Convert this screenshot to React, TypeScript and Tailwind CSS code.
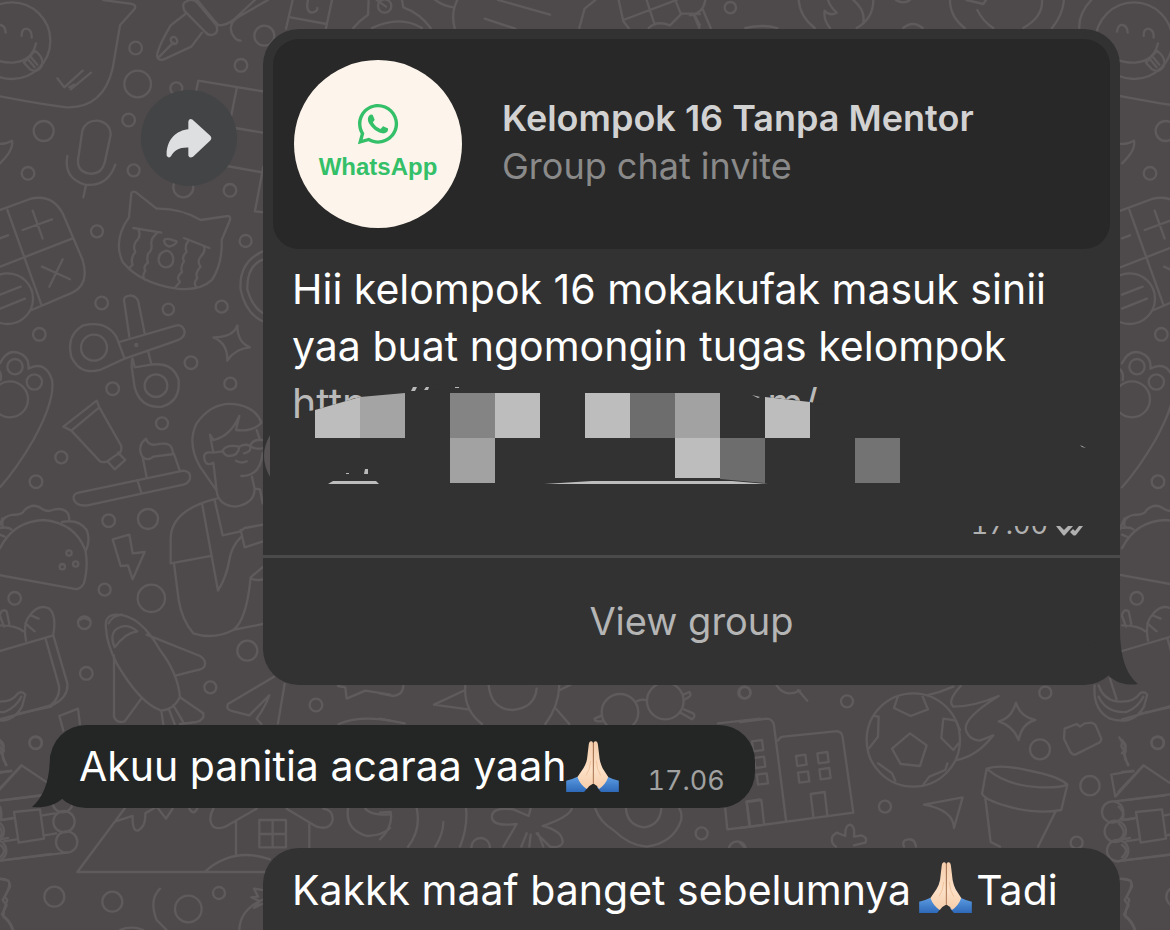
import type { ReactNode } from 'react'
import { FaWhatsapp } from 'react-icons/fa'

type Dot = [number, number, number]

interface DoodleSheet {
  x: number
  y: number
  dots: Dot[]
  lines: string[]
}

// wallpaper drawings, each sheet is drawn at 3x and placed at x/y
const sheets: DoodleSheet[] = [
  {
    x: 0,
    y: 0,
    dots: [
      [407, 144, 19], [413, 252, 40], [529, 265, 18], [723, 196, 19], [793, 107, 30], [386, 360, 19],
      [131, 393, 30], [401, 511, 18], [84, 520, 19], [690, 571, 19], [550, 562, 30], [291, 694, 18],
      [737, 723, 18], [305, 909, 19], [505, 928, 17], [665, 920, 18], [36, 122, 115], [23, 896, 76],
    ],
    lines: [
      // smiley
      'M-15 95Q-12 72 2 75Q16 78 17 98M65 108Q64 86 80 86Q96 90 95 113M-50 150Q-20 190 40 188Q96 184 108 130M72 188L105 152M105 152Q133 174 126 196Q112 222 90 208L72 188M92 170L112 194M84 178L104 202',
      // speech bubble
      'M310 0L390 11Q412 14 403 28L360 76L338 205Q310 325 200 322Q120 312 0 289L-60 277M172 235L193 262L248 212M212 268L273 218M208 262L222 254',
      // pen
      'M556 42L512 76Q480 130 472 160Q468 182 490 179L574 140L606 98M478 170L520 128M514 125A9 9 0 1 0 530 118A9 9 0 1 0 514 125M553 32Q544 8 560 4Q574 -6 590 6L648 74Q658 98 640 104Q624 108 616 96ZM592 0Q640 60 656 76Q680 76 700 60L765 0M804 0L716 50Q685 70 695 98Q706 122 722 122',
      // brick wall
      'M588 275L595 242L800 276M710 266L694 346M706 384L800 400M680 498L780 516M790 500L765 634L800 638',
      // mic
      'M247 392Q258 360 294 362Q332 370 332 405L314 488Q304 524 270 521Q232 516 234 480ZM202 468Q190 534 255 554Q322 562 346 494M258 556L250 592',
      'M-10 430Q10 436 36 422Q42 450 0 490',
      // calculator
      'M-10 634L90 597Q155 580 188 640L248 780Q270 856 212 880L95 930M22 630L124 914M-10 804L216 716M98 632L128 716M68 690L156 658M126 800L210 838M188 778L148 860M0 715L24 706M0 884L62 860M0 926L75 896',
      // crying cat
      'M387 652L394 580Q400 570 412 580L470 626Q540 624 602 660L684 648Q692 650 690 660L665 720Q668 790 636 840Q600 874 530 866Q420 850 368 786Q338 720 387 652M400 684L484 698M552 714L628 744M416 690Q424 710 408 724Q398 740 406 756Q390 776 398 794L386 806M470 700Q452 716 454 732Q458 750 444 762Q440 776 444 788Q428 800 436 812Q424 830 436 840M566 720Q552 740 560 756Q544 770 552 784Q540 800 546 816Q526 832 540 846L526 862M612 740Q618 754 602 770Q590 786 602 800Q584 820 592 834Q578 850 590 862M492 722Q496 714 512 718L530 724Q530 734 508 740Q494 736 492 722M500 752Q474 758 476 782Q480 802 498 802Q520 800 520 776Q516 754 500 752Z',
      'M800 750Q715 780 722 870Q740 950 800 968M800 775Q740 790 742 868Q760 930 800 945',
    ],
  },
  {
    x: 0,
    y: 300,
    dots: [
      [118, 103, 19], [282, 143, 39], [573, 188, 19], [338, 266, 19], [468, 257, 34], [691, 251, 18],
      [486, 370, 18], [184, 472, 18], [108, 545, 19], [326, 662, 19], [444, 657, 30], [314, 869, 18],
      [454, 895, 41], [44, 895, 19], [45, 200, 23], [103, 246, 23], [30, 298, 54], [207, 759, 8],
      [227, 792, 8], [187, 800, 8], [409, 135, 3],
    ],
    lines: [
      // scissors
      'M388 110L372 0Q372 -12 392 -14Q414 -10 416 10L434 100M358 126L530 76Q552 74 554 98Q552 114 530 122L374 176L300 210Q240 226 214 170Q198 106 250 76Q320 60 350 112L374 176M398 176L404 202L440 196Q518 180 536 240Q542 304 486 320Q422 326 404 262L395 200L396 178M444 152L454 192',
      'M640 112Q700 112 712 76Q712 128 750 142Q704 146 682 182Q684 130 640 112Z',
      // paw
      'M0 190Q20 148 54 158Q90 170 85 206Q136 180 156 240Q166 300 100 420Q50 506 0 562M-20 200Q8 210 2 240',
      // tube
      'M190 380L290 302L298 322L214 392ZM298 322L364 438Q366 460 350 464L322 484Q306 490 298 482L214 392M322 484L344 508L376 480L354 458',
      // brush
      'M222 600Q216 582 236 578L550 512Q574 514 570 536Q566 550 550 554L262 616Q232 620 222 600M412 540L424 578M440 532L428 472Q414 450 426 428L438 416Q444 436 466 434Q510 424 516 446Q520 462 522 462L540 514M430 472Q444 484 460 470L522 462',
      // person
      'M650 572L600 500Q560 430 590 370Q640 300 714 314Q770 326 784 368Q760 396 708 390L718 348Q690 410 640 420L630 404L640 458Q606 452 614 480Q620 500 640 488L650 572M640 458L668 454M668 452Q680 432 718 440Q716 468 686 468Q672 466 668 452M718 440Q736 430 750 438Q756 456 732 460M752 434Q762 416 790 420M754 440Q772 450 790 444M708 482Q726 492 740 484M724 528Q780 530 788 460M650 572Q654 616 706 620Q764 610 764 566L756 530M764 566L780 568L788 610M770 390L780 420M650 596Q510 630 512 720L512 790L634 768M606 610L654 872Q680 830 688 780Q694 740 722 712M644 600L668 706L722 694L734 684L790 674M722 690L734 742L790 724M522 790L536 900Q546 960 580 1000Q640 1020 700 990Q740 960 752 832L790 800M752 832Q760 844 790 838M700 990L790 972',
      // taco
      'M8 680Q0 650 40 644Q66 646 74 630Q100 606 128 628Q144 638 164 628Q208 622 208 660M186 666Q236 656 260 690Q272 720 258 752M0 745Q40 664 130 660Q224 668 256 750Q266 800 252 850Q240 872 220 866L-10 824M0 684Q24 680 34 688M0 704L14 710M-8 690L8 655',
      'M338 718L388 704L398 760L434 756L398 838L384 796L362 798Z',
      'M240 960Q252 948 266 960',
    ],
  },
  {
    x: 0,
    y: 600,
    dots: [
      [253, 68, 19], [259, 220, 19], [742, 152, 30], [631, 262, 18], [948, 315, 19], [107, 428, 19],
      [163, 890, 30], [337, 905, 30], [565, 927, 40], [657, 879, 18], [192, 665, 32], [200, 726, 32],
      [188, 607, 30],
    ],
    lines: [
      // grocery bag
      'M-10 156L160 106L202 250Q206 290 160 314L0 358M136 114L176 254Q184 290 150 318M78 122Q68 70 90 46Q116 10 148 26Q170 46 160 104M92 46L116 56M76 70L104 94M70 94Q50 76 0 76M0 44Q6 24 20 34L28 72M0 48L12 80',
      // rocket
      'M318 86Q312 44 350 44Q420 44 480 150Q534 220 540 292Q520 330 484 332Q420 310 350 190Q320 130 318 86M344 142Q376 98 412 94Q376 64 344 92Q330 112 344 142M326 70Q336 48 366 44M440 104L600 168Q620 180 614 198Q608 208 594 210L524 228M342 166L342 350Q350 372 374 364L424 296M484 332L490 374M506 326L524 372M520 316L552 370M540 292L610 340Q614 360 590 366L540 372',
      'M178 348L234 326L240 374M178 348L190 392M-4 420Q20 430 6 460L18 496',
      // cabin
      'M0 516L34 514M-10 575L64 496L142 548M0 602L130 586M0 660L36 656M42 636L120 628L132 716L56 728ZM128 646L164 640M0 718L24 714M134 706L168 700M0 782L200 758M-10 620Q12 640 0 660M-10 670Q20 700 -10 720M0 735Q24 750 0 772',
      // mountain house
      'M375 624L232 816L800 816M346 664L398 648Q396 694 414 692Q438 680 436 640L470 620L498 656L518 626M568 626Q580 648 592 626M640 626Q622 660 640 680Q660 692 690 672L770 626M860 626L950 680Q990 692 998 660Q1000 630 970 626M708 664L708 768M928 672L928 742M778 660L858 660L858 742L778 742ZM818 660L818 742M778 702L858 702M616 814Q700 740 810 778',
      'M822 230L684 312Q676 330 700 334L748 346L808 286Q796 320 770 356L784 372M854 252L834 370M1014 258L1036 262L1040 296L1096 272L1170 284M1016 372Q1080 346 1170 362M1044 626Q1036 690 1100 708Q1150 706 1170 684M1096 626Q1110 646 1170 644',
      'M480 866Q446 900 470 960L500 990M0 836Q32 836 30 860L14 890L22 900L12 930L10 950Q30 966 38 990M786 900Q720 930 718 990M786 870L762 866L774 890L754 892L780 904L762 924L786 912M360 990Q394 976 430 990M0 420Q16 440 0 460',
    ],
  },
  {
    x: 380,
    y: 660,
    dots: [
      [1093, 98, 18], [965, 520, 18], [302, 562, 28], [720, 157, 55], [856, 123, 55], [1072, 570, 26],
    ],
    lines: [
      'M0 100L40 108Q72 104 70 74M256 90L162 134L264 148M0 176L74 190M256 76Q250 150 306 192M538 76Q536 140 496 192M326 76Q334 148 398 150Q464 144 470 86M540 90L572 74M528 146L568 192M770 124Q782 116 800 120M910 104L928 96Q936 104 926 112L912 120M902 158L936 178Q948 170 940 160L912 148M666 166L644 176Q642 186 666 184',
      'M0 458L32 456Q40 500 0 538M110 444Q124 510 84 560M258 444Q264 500 240 560M190 486Q190 520 166 560M400 448L446 468L452 446M400 448Q332 440 336 474Q340 500 410 492L370 560M576 444Q570 470 488 498Q550 514 548 548Q540 566 510 560L470 520M440 520L424 560M452 524L448 560M474 520L490 560M646 446Q660 486 700 510Q750 558 800 560Q880 550 904 480Q906 456 898 446M738 446Q742 496 792 502Q840 496 844 446',
      // flats
      'M1014 190L1140 176M1036 446L1042 508L1140 496M1100 424L1140 418M1100 424L1110 496',
    ],
  },
  {
    x: 740,
    y: 660,
    dots: [
      [15, 98, 17], [321, 124, 18], [916, 98, 18], [900, 268, 30], [1050, 377, 29], [1253, 249, 18],
      [435, 440, 18], [1010, 548, 18], [1118, 456, 32], [1126, 514, 32], [1133, 572, 32], [520, 240, 140],
    ],
    lines: [
      'M110 76Q134 114 180 92M174 90L202 122',
      // flats
      'M0 186L80 176Q98 176 102 196L138 480M114 242Q118 232 130 230L284 214Q306 212 308 232L340 458L0 504M20 426L64 420L72 490M20 426L28 496M212 402L254 396L262 466M212 402L220 470M36 244L66 240L70 270L40 274ZM42 294L72 290L76 320L46 324ZM50 344L80 340L84 370L54 374ZM168 288L196 284L200 314L172 318ZM174 338L204 334L208 364L178 368ZM232 280L262 276L266 306L236 310ZM238 328L268 324L272 354L242 358Z',
      // football
      'M510 220L560 256L540 318L482 312L456 266ZM474 108L462 144L512 168L564 148L548 110M610 176L648 182L660 210M610 176L604 234L640 270L656 250M386 266L414 230L416 170L404 168M414 310L456 340L466 362M550 374L568 350L616 330L622 310M560 106Q600 98 640 80M662 78Q620 124 640 140Q700 140 776 108Q660 180 680 216Q690 240 720 242L760 226Q710 290 650 300',
      'M828 128Q840 170 886 180Q846 190 836 240Q820 198 776 184Q814 176 828 128Z',
      'M552 434L668 412L642 504Q640 450 552 434Z',
      'M974 206L1010 192L1020 200L1034 190L1056 188L1066 194L1084 236Q1084 246 1074 250L1006 284Q996 284 990 274L972 236Z',
      // flower pot
      'M740 326Q780 312 860 330Q960 350 982 374L964 450Q900 462 820 444Q740 424 726 402ZM740 326Q800 378 900 382Q960 384 982 374M736 414L752 546L780 560M946 456L894 560',
      // banana
      'M1064 76Q1058 150 1110 176Q1180 198 1212 140L1222 104Q1214 92 1200 100Q1180 130 1130 124Q1090 118 1076 76M1110 56L1130 118M1076 110Q1100 160 1160 156Q1196 140 1210 110M1196 162L1300 140',
      'M1138 232Q1148 246 1146 250Q1140 264 1158 272Q1146 290 1166 314M1114 344L1180 332M1114 344L1126 410L1210 318M1124 424L1300 402M1150 480L1186 474M1158 544L1196 538M1130 604L1300 582',
      // flowers
      'M288 560Q270 548 278 528L290 518L316 528Q314 496 330 494Q346 498 342 530L364 526Q384 532 376 548L342 556M492 560Q484 540 506 538Q524 536 528 560M0 548L14 562M1140 656L1172 662Q1180 680 1154 720L1166 736L1152 764Q1176 780 1186 810',
    ],
  },
  {
    x: 230,
    y: 0,
    dots: [[464, 18, 20]],
    lines: [
      'M188 0L168 86M182 52L290 72M306 0L288 84M234 0Q226 36 246 38Q264 34 262 24M416 0L414 44Q390 60 370 84M516 0L520 22Q570 40 602 84M426 84Q510 44 576 84M440 0L468 20M616 0Q640 18 670 22M682 0Q662 40 674 84M804 0L960 44M764 56L856 86M1096 0L1064 26L1048 84M1166 0L1180 64L1196 84M1180 60L1340 0M1250 0L1274 74M1336 0L1352 40L1410 42M1256 84Q1280 60 1320 76L1352 44M1392 42L1410 76',
    ],
  },
  {
    x: 690,
    y: 0,
    dots: [[121, 23, 17]],
    lines: [
      'M0 46Q40 40 46 0M12 46L28 84M38 28L62 84M166 84Q220 72 262 84M326 0Q330 50 374 84M414 0Q420 20 440 38Q420 50 404 32Q400 60 420 84M490 0Q526 30 520 66M550 0Q550 56 500 84M618 0Q640 14 660 0M640 84Q668 60 698 84M780 0Q780 50 824 84M830 0L880 12L888 0M862 30Q880 66 910 84M1056 0Q1060 50 1000 84M1122 0Q1118 46 1086 84M1204 0Q1166 40 1168 84',
    ],
  },
]

function Wallpaper() {
  return (
    <svg className="absolute inset-0 h-full w-full" aria-hidden="true">
      <defs>
        <g id="doodles" fill="none" stroke="#5f5b5c" strokeWidth="7" strokeLinecap="round" strokeLinejoin="round">
          {sheets.map((sheet, i) => (
            <g key={i} transform={`translate(${sheet.x} ${sheet.y}) scale(0.3333)`}>
              {sheet.dots.map(([cx, cy, r], j) => (
                <circle key={j} cx={cx} cy={cy} r={r} />
              ))}
              {sheet.lines.map((d, j) => (
                <path key={j} d={d} />
              ))}
            </g>
          ))}
        </g>
      </defs>
      <use href="#doodles" x="-1122" />
      <use href="#doodles" />
      <use href="#doodles" x="1122" />
    </svg>
  )
}

function PrayEmoji() {
  return (
    <svg viewBox="0 0 159 154" className="h-[51px] w-[53px] shrink-0" aria-hidden="true">
      <defs>
        <linearGradient id="skin" x1="0" y1="0" x2="0" y2="1">
          <stop offset="0" stopColor="#f5cfae" />
          <stop offset="0.6" stopColor="#fce0c6" />
          <stop offset="1" stopColor="#f6cdaa" />
        </linearGradient>
        <linearGradient id="sleeve" x1="0" y1="0" x2="0" y2="1">
          <stop offset="0" stopColor="#5b9be2" />
          <stop offset="1" stopColor="#2e69b8" />
        </linearGradient>
      </defs>
      <path d="M0 120Q18 116 34 108L66 140L54 154H0Z" fill="url(#sleeve)" />
      <path d="M159 120Q141 116 125 108L93 140L105 154H159Z" fill="url(#sleeve)" />
      <path d="M81 6Q80 0 75 1Q69 2 68 12L63 54Q60 70 52 82L34 109Q42 132 62 145Q72 132 82 128Z" fill="url(#skin)" />
      <path d="M83 6Q84 0 89 1Q95 2 96 12L101 54Q104 70 110 82L127 109Q119 132 99 145Q92 132 82 128Z" fill="url(#skin)" />
      <path d="M82 5V128" stroke="#b27c58" strokeWidth="3" fill="none" />
      <path d="M74 60Q72 88 60 104M91 60Q93 88 104 104" stroke="#f1c49d" strokeWidth="3" fill="none" />
    </svg>
  )
}

// pixelated tiles that hide the invite link
const tiles = [
  { points: '23,35 68,22 68,63 23,63', fill: '#bdbdbd' },
  { points: '68,22 113,18 113,63 68,63', fill: '#a4a4a4' },
  { points: '158,18 203,18 203,63 158,63', fill: '#848484' },
  { points: '203,18 248,18 248,63 203,63', fill: '#bdbdbd' },
  { points: '293,18 338,18 338,63 293,63', fill: '#bdbdbd' },
  { points: '338,18 383,18 383,63 338,63', fill: '#6d6d6d' },
  { points: '383,18 428,18 428,63 383,63', fill: '#a2a2a2' },
  { points: '473,22 518,27 518,63 473,63', fill: '#bdbdbd' },
  { points: '158,63 203,63 203,108 158,108', fill: '#a2a2a2' },
  { points: '383,63 428,63 428,103 383,103', fill: '#bdbdbd' },
  { points: '428,63 473,63 473,108 428,104', fill: '#6d6d6d' },
  { points: '563,63 608,63 608,108 563,108', fill: '#737373' },
  { points: '41,106 84,106 87,109 36,109', fill: '#bdbdbd' },
  { points: '252,109 300,106 440,106 476,109', fill: '#bdbdbd' },
]

function CensoredLink() {
  return (
    <div className="relative h-[139px]">
      <a href="#invite" className="flex gap-[400px] text-[#b9b9b9]">
        <span>http</span>
        <span>m/</span>
      </a>
      <svg className="absolute left-0 top-0 h-full w-full overflow-visible" aria-hidden="true">
        <rect x="-10" y="0" width="820" height="12" fill="#323232" />
        <path d="M10 37L23 35L68 22L113 18L160 12H458L473 22L518 27L532 30V63H10Z" fill="#323232" />
        {tiles.map((tile) => (
          <polygon key={tile.points} points={tile.points} fill={tile.fill} />
        ))}
        <path d="M121 12H125L123 16H119ZM134 12H137L136 15H132ZM163 12H167V13H163ZM54 98H57V99H54ZM73 94H76V99H72ZM460 20L468 22L466 23ZM788 70L794 73L790 72Z" fill="#b9b9b9" />
        <path d="M-22 60Q-34 81 -22 102Z" fill="#565253" />
        {/* strip over the upper half of the time */}
        <rect x="600" y="130" width="210" height="21" fill="#323232" />
      </svg>
    </div>
  )
}

function ForwardButton() {
  return (
    <button
      type="button"
      aria-label="Forward"
      className="mt-[61px] flex size-24 shrink-0 items-center justify-center rounded-full bg-[#424445]"
    >
      <svg viewBox="497 349 138 122" className="h-[41px] w-[46px]" fill="#dedfe0">
        <path d="M499 462C497 412 530 385 564 382V360Q565 348 576 353L629 401Q637 409 629 417L578 465Q567 471 564 461V437C537 436 521 446 513 462Q506 472 499 462Z" />
      </svg>
    </button>
  )
}

function SentBubble({ children, className }: { children: ReactNode; className: string }) {
  return <div className={`relative min-w-0 flex-1 bg-[#323232] ${className}`}>{children}</div>
}

export default function App() {
  return (
    <main className="relative h-screen overflow-hidden bg-[#4e4a4b] font-['Inter','Liberation_Sans',sans-serif] text-[41px] leading-[57px] text-white">
      <Wallpaper />

      <div className="relative flex h-full flex-col gap-10 pt-[29px]">
        {/* group invite */}
        <div className="flex shrink-0 items-start gap-[26px] pl-[141px] pr-[50px]">
          <ForwardButton />
          <SentBubble className="rounded-[36px] pt-[10px]">
            <div className="mx-[10px] flex items-center gap-10 rounded-[26px] bg-[#282828] p-[21px]">
              <div className="flex size-[168px] shrink-0 flex-col items-center justify-center rounded-full bg-[#fdf5ec] text-[#34bf69]">
                <FaWhatsapp className="size-[46px]" />
                <span className="font-['Liberation_Sans',sans-serif] text-[24px] font-bold leading-10">WhatsApp</span>
              </div>
              <div className="min-w-0 pb-1 leading-[48px]">
                <h2 className="text-[36px] font-semibold text-[#d2d2d2]">Kelompok 16 Tanpa Mentor</h2>
                <p className="text-[36px] text-[#8a8a8a]">Group chat invite</p>
              </div>
            </div>
            <div className="px-[29px] pt-3">
              <p>
                Hii kelompok 16 mokakufak masuk sinii
                <br />
                yaa buat ngomongin tugas kelompok
              </p>
              <CensoredLink />
              <div className="flex h-[41px] items-start justify-end gap-2 pr-2 text-[27px] leading-[22px] text-[#b0b0b0]">
                <time className="tabular-nums">17.00</time>
                <svg viewBox="0 0 27 10" className="mt-3 h-[10px] w-[27px]" fill="currentColor" aria-hidden="true">
                  <path d="M0 0H4L8 4L12 0H17L9 9Q8 10 7 9ZM17 3L19 5L23 0H27L20 9Q18 10 17 9L14 6Z" />
                </svg>
              </div>
            </div>
            <button type="button" className="block h-[130px] w-full border-t-[3px] border-[#4a4a4a] text-[38px] text-[#b5b5b5]">
              View group
            </button>
            <svg viewBox="0 0 54 56" className="absolute -right-[18px] bottom-0 h-[56px] w-[54px]" fill="#323232" aria-hidden="true">
              <path d="M36 0C36 28 42 45 54 55C43 57 33 54 25 47L0 20Z" />
            </svg>
          </SentBubble>
        </div>

        {/* reply */}
        <div className="flex shrink-0 pl-[50px]">
          <div className="relative flex h-[83px] items-center rounded-[36px] bg-[#242625] pl-[29px] pr-[30px]">
            <span>Akuu panitia acaraa yaah</span>
            <PrayEmoji />
            <time className="ml-7 mt-7 text-[27px] leading-8 tabular-nums text-[#a0a1a0]">17.06</time>
            <svg viewBox="0 0 58 54" className="absolute -left-[18px] bottom-0 h-[54px] w-[58px]" fill="#242625" aria-hidden="true">
              <path d="M18 0C18 27 12 42 0 53C11 54 22 52 30 45L34 42Z" />
            </svg>
          </div>
        </div>

        <div className="flex flex-1 pl-[263px] pr-[50px]">
          <SentBubble className="flex items-start rounded-t-[36px] px-[29px] pt-[14px]">
            <span className="mr-2">Kakkk maaf banget sebelumnya</span>
            <PrayEmoji />
            <span className="ml-1">Tadi</span>
          </SentBubble>
        </div>
      </div>
    </main>
  )
}
